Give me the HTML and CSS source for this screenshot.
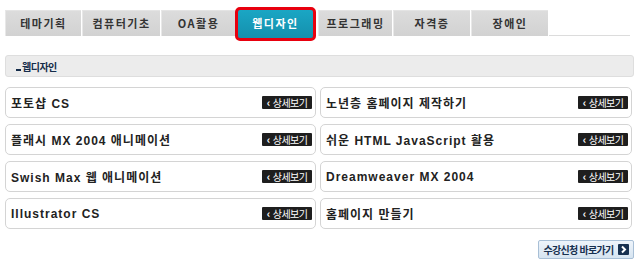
FILE: index.html
```html
<!DOCTYPE html>
<html lang="ko">
<head>
    <meta charset="UTF-8">
    <title>웹디자인</title>

    <link rel="stylesheet" href="styles.css">
</head>
<body>
<div class="container">
    <!-- category tabs -->
    <ul class="tabs">
        <li class="tab" style="width:76px">테마기획</li>
        <li class="tab" style="width:78px">컴퓨터기초</li>
        <li class="tab" style="width:74px">OA활용</li>
        <li class="tab active" style="width:81px">웹디자인</li>
        <li class="tab" style="width:74px">프로그래밍</li>
        <li class="tab" style="width:77px">자격증</li>
        <li class="tab" style="width:77px">장애인</li>
        <li class="tab-rest"></li>
    </ul>

    <div class="section-title"><span class="dash"></span>웹디자인</div>

    <div class="courses">
        <div class="course">
            <span class="name">포토샵 CS</span>
            <a href="#" class="more"><b>&lsaquo;</b> 상세보기</a>
        </div>
        <div class="course">
            <span class="name">노년층 홈페이지 제작하기</span>
            <a href="#" class="more"><b>&lsaquo;</b> 상세보기</a>
        </div>
        <div class="course">
            <span class="name">플래시 MX 2004 애니메이션</span>
            <a href="#" class="more"><b>&lsaquo;</b> 상세보기</a>
        </div>
        <div class="course">
            <span class="name">쉬운 HTML JavaScript 활용</span>
            <a href="#" class="more"><b>&lsaquo;</b> 상세보기</a>
        </div>
        <div class="course">
            <span class="name">Swish Max 웹 애니메이션</span>
            <a href="#" class="more"><b>&lsaquo;</b> 상세보기</a>
        </div>
        <div class="course">
            <span class="name">Dreamweaver MX 2004</span>
            <a href="#" class="more"><b>&lsaquo;</b> 상세보기</a>
        </div>
        <div class="course">
            <span class="name">Illustrator CS</span>
            <a href="#" class="more"><b>&lsaquo;</b> 상세보기</a>
        </div>
        <div class="course">
            <span class="name">홈페이지 만들기</span>
            <a href="#" class="more"><b>&lsaquo;</b> 상세보기</a>
        </div>
    </div>

    <div class="footer">
        <a href="#" class="apply">수강신청 바로가기
            <svg width="11" height="11" viewBox="0 0 11 11">
                <rect width="11" height="11" rx="1" fill="#17304f"/>
                <path d="M4 2.5 L7 5.5 L4 8.5" fill="none" stroke="#fff" stroke-width="2"/>
            </svg>
        </a>
    </div>
</div>
</body>
</html>
```

FILE: styles.css
```css
body {
    margin: 0;
    background: #fff;
    font-family: "Liberation Sans", "Noto Sans CJK KR", sans-serif;
    color: #222;
}

.container {
    width: 629px;
    padding: 0 6px 0 5px;
}

.tabs {
    display: flex;
    height: 26px;
    margin: 10px 0 0;
    padding: 0;
    list-style: none;
}

.tab {
    box-sizing: border-box;
    height: 26px;
    margin-right: 1px;
    background: linear-gradient(#dcdcdc, #d2d2d2);
    border-top: 1px solid #e4e4e4;
    border-left: 1px solid #e8e8e8;
    color: #333;
    font-family: "Noto Sans CJK KR", sans-serif;
    font-size: 11px;
    font-weight: 700;
    letter-spacing: 1.5px;
    line-height: 24px;
    text-align: center;
}

.tab.active {
    height: 34px;
    margin: -3px 2px 0 -1px;
    border: 3px solid #e8000e;
    border-radius: 5px;
    background: linear-gradient(#1aa6c4, #1590ad);
    color: #fff;
    line-height: 27px;
}

.tab-rest {
    flex: 0 0 81px;
    height: 26px;
    box-sizing: border-box;
    border-bottom: 1px solid #dcdcdc;
}

.section-title {
    box-sizing: border-box;
    height: 22px;
    margin-top: 19px;
    padding-left: 10px;
    display: flex;
    align-items: center;
    background: #ececec;
    border: 1px solid #dedede;
    border-radius: 3px;
    color: #142c4a;
    font-family: "Noto Sans CJK KR", sans-serif;
    font-size: 10px;
    font-weight: 700;
    letter-spacing: -0.5px;
}

.section-title .dash {
    width: 5px;
    height: 2px;
    margin: 7px 1px 0 0;
    background: #142c4a;
}

.courses {
    display: grid;
    grid-template-columns: 311px 312px;
    grid-auto-rows: 31px;
    column-gap: 4px;
    row-gap: 6px;
    margin-top: 10px;
}

.course {
    box-sizing: border-box;
    display: flex;
    align-items: center;
    justify-content: space-between;
    padding: 0 3px 0 5px;
    background: #fff;
    border: 1px solid #d4d4d4;
    border-radius: 5px;
}

.course .name {
    font-size: 12px;
    font-weight: 700;
    letter-spacing: 1px;
    color: #222;
}

.more {
    display: block;
    width: 50px;
    height: 13px;
    background: #1e1e1e;
    border-radius: 1px;
    color: #fff;
    font-family: "Noto Sans CJK KR", sans-serif;
    font-size: 10px;
    line-height: 13px;
    letter-spacing: -0.6px;
    text-align: center;
    text-decoration: none;
    white-space: nowrap;
}

.more b {
    font-size: 11px;
    margin-right: 1px;
}

.footer {
    display: flex;
    justify-content: flex-end;
    margin-top: 11px;
}

.apply {
    box-sizing: border-box;
    display: flex;
    align-items: center;
    justify-content: center;
    gap: 4px;
    width: 96px;
    height: 19px;
    background: linear-gradient(#eef4fa, #d6e4f1);
    border: 1px solid #a8bfd6;
    border-radius: 2px;
    color: #17304f;
    font-family: "Noto Sans CJK KR", sans-serif;
    font-size: 10px;
    font-weight: 700;
    letter-spacing: -0.7px;
    text-decoration: none;
    white-space: nowrap;
}
```
